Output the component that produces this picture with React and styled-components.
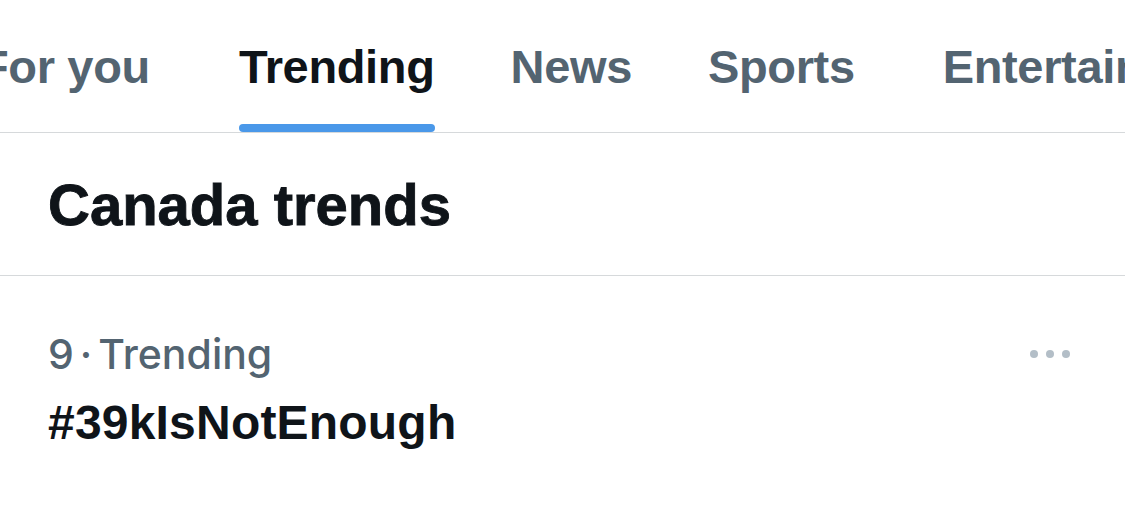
import React from 'react';
import styled, {createGlobalStyle} from 'styled-components';

const GlobalStyle = createGlobalStyle`
  html, body {
    margin: 0;
    padding: 0;
    background: #fff;
  }
  body {
    font-family: "Liberation Sans", Arial, sans-serif;
    color: #0f1419;
    overflow: hidden;
  }
`;

const Page = styled.div`
  width: 1125px;
  height: 532px;
  overflow: hidden;
  background: #fff;
`;

const TabBar = styled.nav`
  height: 132px;
  border-bottom: 1px solid #d6d9db;
  overflow: hidden;
`;

const TabStrip = styled.div`
  display: flex;
  height: 100%;
  margin-left: -58px;
`;

const Tab = styled.div`
  position: relative;
  display: flex;
  align-items: center;
  flex-shrink: 0;
  padding: 0 38px;
  margin-left: ${p => p.$gap || 0}px;
  font-size: 47px;
  font-weight: 700;
  letter-spacing: -0.35px;
  white-space: nowrap;
  color: ${p => (p.$active ? '#0f1419' : '#536471')};
`;

const Indicator = styled.span`
  position: absolute;
  left: 38px;
  right: 38px;
  bottom: 0;
  height: 8px;
  border-radius: 4px;
  background: #4a98e9;
`;

const Heading = styled.h2`
  margin: 0;
  height: 142px;
  display: flex;
  align-items: center;
  padding-left: 48px;
  font-size: 58px;
  font-weight: 700;
  -webkit-text-stroke: 0.9px #0f1419;
  color: #0f1419;
  border-bottom: 1px solid #d6d9db;
`;

const TrendItem = styled.div`
  padding: 52px 55px 0 48px;
`;

const MetaRow = styled.div`
  display: flex;
  align-items: center;
  justify-content: space-between;
`;

const Meta = styled.span`
  font-family: Inter, "Liberation Sans", sans-serif;
  font-size: 41px;
  font-weight: 500;
  line-height: 52px;
  color: #536471;
`;

const Dot = styled.span`
  padding: 0 6px;
`;

const TrendName = styled.div`
  margin-top: 12px;
  font-size: 48px;
  line-height: 1.3;
  font-weight: 700;
  letter-spacing: 0.2px;
  color: #0f1419;
`;

const MoreButton = styled.button`
  border: 0;
  background: none;
  padding: 0;
  display: flex;
  cursor: pointer;
`;

const tabs = [
  {label: 'For you'},
  {label: 'Trending', active: true, gap: 13},
  {label: 'News'},
  {label: 'Sports'},
  {label: 'Entertainment', gap: 12},
];

function MoreIcon() {
  return (
    <svg width="40" height="10" viewBox="0 0 40 10">
      <circle cx="4" cy="5" r="4" fill="#b3bec7" />
      <circle cx="20" cy="5" r="4" fill="#b3bec7" />
      <circle cx="36" cy="5" r="4" fill="#b3bec7" />
    </svg>
  );
}

export default function App() {
  return (
    <Page>
      <GlobalStyle />
      <TabBar>
        <TabStrip>
          {tabs.map(tab => (
            <Tab key={tab.label} $active={tab.active} $gap={tab.gap}>
              {tab.label}
              {tab.active && <Indicator />}
            </Tab>
          ))}
        </TabStrip>
      </TabBar>
      <Heading>Canada trends</Heading>
      <TrendItem>
        <MetaRow>
          <Meta>9<Dot>·</Dot>Trending</Meta>
          <MoreButton aria-label="More">
            <MoreIcon />
          </MoreButton>
        </MetaRow>
        <TrendName>#39kIsNotEnough</TrendName>
      </TrendItem>
    </Page>
  );
}
